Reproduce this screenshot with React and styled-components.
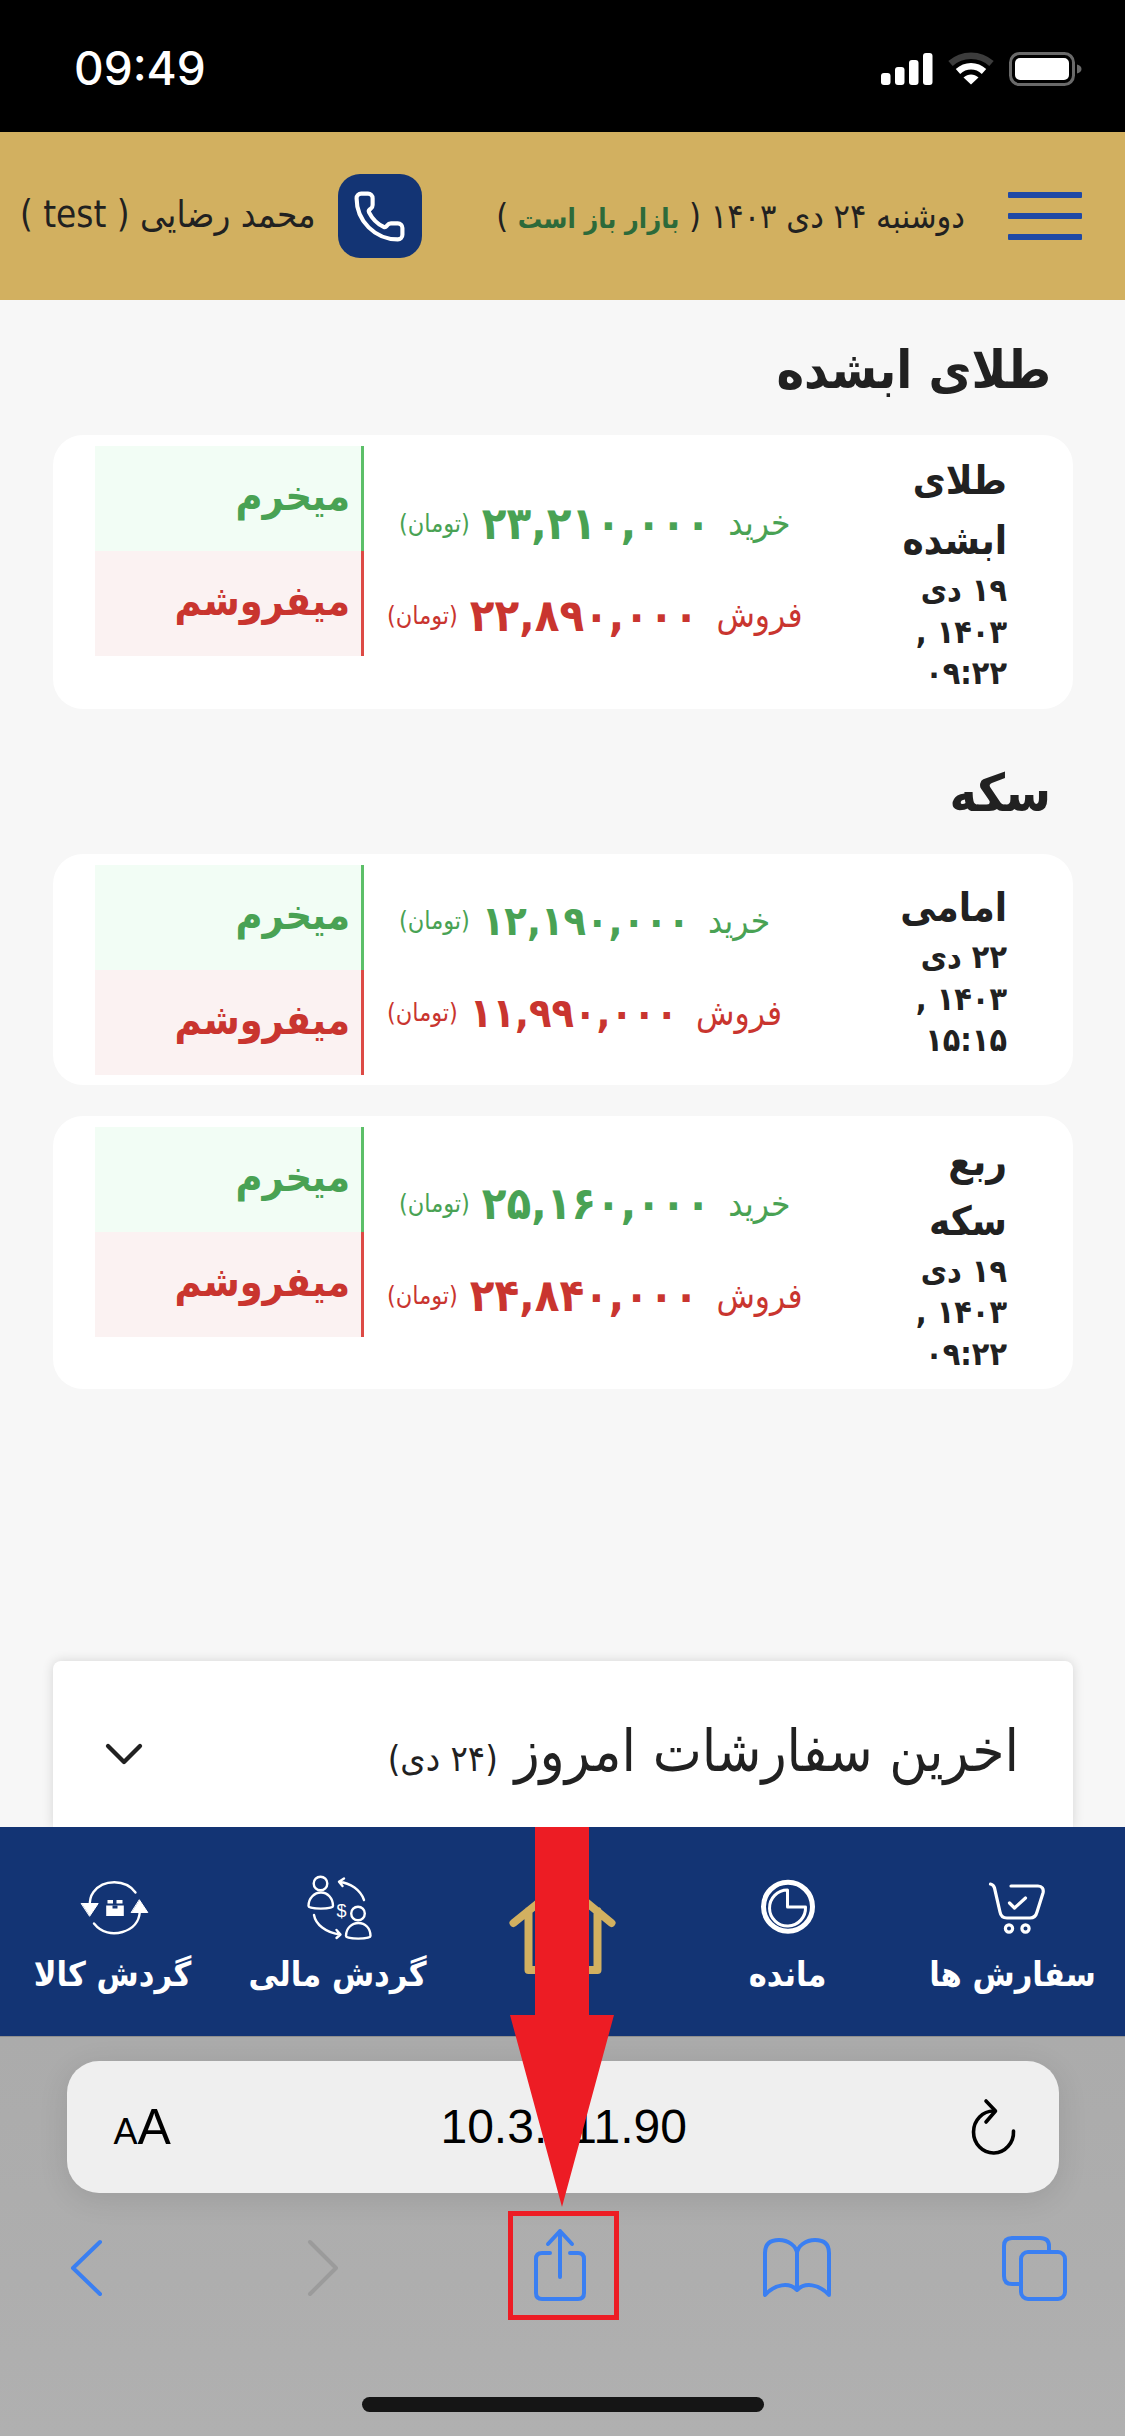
import React from 'react';
import styled, { createGlobalStyle } from 'styled-components';
import { Phone, ChevronDown } from 'lucide-react';

const Global = createGlobalStyle`
  html, body { margin: 0; padding: 0; background: #adadad; }
  * { box-sizing: border-box; }
`;

const fa = `"DejaVu Sans", sans-serif`;
const GREEN = '#49a254';
const RED = '#c9352f';
const NAVY = '#133474';
const BLUE = '#3a7ff2';

const Screen = styled.div`
  position: relative;
  width: 1125px;
  height: 2436px;
  overflow: hidden;
  display: flex;
  flex-direction: column;
  font-family: ${fa};
  font-stretch: condensed;
  color: #212121;
`;

const StatusBar = styled.div`
  height: 132px;
  flex: none;
  background: #000;
  display: flex;
  align-items: flex-start;
  justify-content: space-between;
  padding: 40px 43px 0 74px;
`;
const Clock = styled.div`
  font-family: Inter, sans-serif;
  font-stretch: normal;
  font-weight: 500;
  font-size: 46px;
  line-height: 56px;
  color: #fff;
`;
const StatusIcons = styled.div`
  display: flex;
  align-items: flex-start;
  gap: 15px;
  padding-top: 12px;
`;

const Header = styled.header`
  height: 168px;
  flex: none;
  background: #d2b060;
  display: flex;
  direction: rtl;
  align-items: center;
  padding: 0 43px 0 20px;
`;
const Burger = styled.div`
  width: 74px;
  display: flex;
  flex-direction: column;
  gap: 15px;
  & > i { display: block; height: 6px; background: #1f49a6; border-radius: 1px; }
`;
const DateLine = styled.div`
  flex: 1;
  font-size: 34px;
  margin-right: 43px;
  white-space: nowrap;
`;
const Market = styled.span`
  color: #2d6a3a;
  font-weight: 700;
  font-size: 27px;
`;
const CallButton = styled.div`
  width: 84px;
  height: 84px;
  border-radius: 22px;
  background: ${NAVY};
  color: #fff;
  display: flex;
  align-items: center;
  justify-content: center;
  margin-left: 22px;
`;
const UserName = styled.div`
  font-size: 36.5px;
  white-space: nowrap;
  margin-top: -4px;
`;

const Main = styled.main`
  flex: 1;
  min-height: 0;
  background: #f7f7f7;
  direction: rtl;
  display: flex;
  flex-direction: column;
  padding: 0 52px 0 53px;
`;
const Title = styled.h2`
  margin: ${p => p.$top}px 22px ${p => p.$bottom}px 0;
  height: 80px;
  line-height: 80px;
  font-size: 52px;
  font-weight: 700;
`;
const Card = styled.article`
  background: #fff;
  border-radius: 30px;
  padding: 11px 66px 10px 42px;
  display: flex;
  align-items: center;
  margin-bottom: 31px;
`;
const Item = styled.div`
  margin-left: auto;
  padding: 4px 0;
  text-align: right;
  white-space: nowrap;
`;
const ItemName = styled.div`
  font-size: 40px;
  font-weight: 700;
  line-height: 60px;
`;
const ItemDate = styled.div`
  font-size: 32px;
  font-weight: 700;
  line-height: 41.5px;
`;
const Prices = styled.div`
  display: flex;
  flex-direction: column;
  align-items: center;
  gap: 37px;
  margin-left: 23px;
  margin-top: -6px;
`;
const PriceRow = styled.div`
  display: flex;
  align-items: center;
  height: 55px;
  color: ${p => p.$c};
  white-space: nowrap;
`;
const PriceLabel = styled.span`
  font-size: 35px;
  margin-left: 18px;
`;
const Amount = styled.span`
  font-size: ${p => p.$size || 45}px;
  font-weight: 700;
  margin-left: 12px;
`;
const Toman = styled.span`
  font-size: 25px;
`;
const Actions = styled.div`
  align-self: flex-start;
  width: 269px;
  flex: none;
`;
const Action = styled.div`
  height: 105px;
  background: ${p => p.$bg};
  border-right: 3px solid ${p => p.$line};
  color: ${p => p.$c};
  font-size: 41px;
  font-weight: 700;
  padding: 0 11px 5px 0;
  display: flex;
  align-items: center;
  white-space: nowrap;
`;

const Accordion = styled.section`
  margin-top: auto;
  height: 166px;
  background: #fff;
  border-radius: 8px 8px 0 0;
  box-shadow: 0 0 12px rgba(0, 0, 0, 0.14);
  display: flex;
  align-items: center;
  justify-content: space-between;
  padding: 20px 54px 0 39px;
`;
const AccTitle = styled.div`
  font-size: 58px;
  white-space: nowrap;
  margin-top: -6px;
  & small { font-size: 36px; }
`;

const BottomNav = styled.nav`
  height: 210px;
  flex: none;
  background: ${NAVY};
  border-bottom: 1px solid #8f8f8f;
  display: grid;
  grid-template-columns: repeat(5, 225px);
  direction: rtl;
`;
const NavItem = styled.div`
  display: flex;
  flex-direction: column;
  align-items: center;
  padding-top: 48px;
  color: #fff;
`;
const NavLabel = styled.div`
  font-size: 34px;
  font-weight: 700;
  line-height: 50px;
  margin-top: 2px;
  white-space: nowrap;
`;

const Toolbar = styled.div`
  height: 399px;
  flex: none;
  padding-top: 24px;
  display: flex;
  flex-direction: column;
  align-items: center;
  background: linear-gradient(#ababab, #adadad 40%, #b0b0b0);
`;
const UrlBar = styled.div`
  width: 992px;
  height: 132px;
  border-radius: 32px;
  background: #efefef;
  box-shadow: 0 6px 30px rgba(0, 0, 0, 0.1);
  display: flex;
  align-items: center;
  justify-content: space-between;
  padding: 0 40px 0 47px;
  font-family: "Liberation Sans", sans-serif;
  font-stretch: normal;
  color: #000;
`;
const Aa = styled.div`
  font-size: 50px;
  line-height: 1;
  & small { font-size: 36px; }
`;
const Url = styled.div`
  font-size: 48px;
  line-height: 1;
  margin-right: 12px;
`;
const Tools = styled.div`
  width: 100%;
  display: flex;
  justify-content: space-between;
  margin-top: 35px;
  padding: 0 56px 0 51px;
`;
const HomeBar = styled.div`
  width: 402px;
  height: 15px;
  border-radius: 8px;
  background: #151515;
  margin-top: 89px;
`;
const ArrowOverlay = styled.svg`
  position: absolute;
  left: 505px;
  top: 1827px;
`;
const Highlight = styled.div`
  position: absolute;
  left: 508px;
  top: 2211px;
  width: 111px;
  height: 109px;
  border: 5px solid #ed1c24;
`;

const Signal = () => (
  <svg width="52" height="34" viewBox="0 0 52 34" fill="#fff">
    <rect x="0" y="21" width="9.5" height="12" rx="3" />
    <rect x="14" y="15" width="9.5" height="18" rx="3" />
    <rect x="28" y="8" width="9.5" height="25" rx="3" />
    <rect x="42" y="1" width="9.5" height="32" rx="3" />
  </svg>
);
const Wifi = () => (
  <svg width="46" height="34" viewBox="0 0 46 34" fill="none" strokeWidth="6.5">
    <path d="M2.5 11.5C14 1 32 1 43.5 11.5" stroke="#3c3c3c" />
    <path d="M10 19.5C17.5 12.5 28.5 12.5 36 19.5" stroke="#fff" />
    <path d="M23 32.5L15.5 25.5C20 21.5 26 21.5 30.5 25.5Z" fill="#fff" />
  </svg>
);
const Battery = () => (
  <svg width="73" height="34" viewBox="0 0 73 34">
    <rect x="1.5" y="1.5" width="63" height="31" rx="9" fill="none" stroke="#6a6a6a" strokeWidth="3" />
    <rect x="6" y="6" width="54" height="22" rx="5" fill="#fff" />
    <path d="M68 12.5c3 .6 4.5 2.4 4.5 4.5s-1.500 3.900-4.500 4.500z" fill="#6a6a6a" />
  </svg>
);

const IconSvg = ({ box, size = 72, children }) => (
  <svg width={size} height={size} viewBox={box} fill="none" stroke="currentColor" strokeWidth="3" strokeLinecap="round" strokeLinejoin="round">
    {children}
  </svg>
);
const CartIcon = () => (
  <IconSvg box="76.5 25 72 72">
    <path d="M90 34c2 .4 3.400 1.600 4 4l5.500 24c.7 4 3 6 7 6h23c4 0 6-2 7-6l6-19c1-4-1-7-5-7h-27" strokeWidth="3.2" />
    <path d="M109 53l5 5 11-10" strokeWidth="3.200" />
    <circle cx="108.500" cy="78.500" r="3.600" strokeWidth="3.200" />
    <circle cx="125" cy="78.500" r="3.600" strokeWidth="3.200" />
  </IconSvg>
);
const ClockIcon = () => (
  <IconSvg box="11.500 15 72 72">
    <circle cx="47.500" cy="46.700" r="24.500" strokeWidth="5" />
    <path d="M47 30A18 18 0 1 0 65 47H47Z" strokeWidth="3" />
  </IconSvg>
);
const HomeIcon = () => (
  <svg width="110" height="110" viewBox="507.500 1875 110 110" fill="none" stroke="#d2b060" strokeWidth="8" strokeLinecap="round" strokeLinejoin="round">
    <path d="M513 1923L562.500 1883L611 1923M528 1911V1970H597V1911" />
  </svg>
);
const MoneyIcon = () => (
  <IconSvg box="41.500 15 72 72">
    <g strokeWidth="2.400">
      <circle cx="60" cy="23.500" r="6.800" />
      <path d="M48 46C48 38 54 32.500 60.500 32.500C67 32.500 72.500 38 72.500 46C72.500 49.500 48 49.500 48 46Z" />
      <circle cx="97.500" cy="53.500" r="6.800" />
      <path d="M85.500 76C85.500 68 91.500 63 98 63C104.500 63 110 68 110 76C110 79.500 85.500 79.500 85.500 76Z" />
      <path d="M103.500 40C100 30 90 23 78.500 21.700M83.500 18.500L78.500 21.700L82 26" />
      <path d="M53.500 55C55 64 65 73 80 74.500M76 70L80 74.500L76 78" />
    </g>
    <text x="81" y="56.500" textAnchor="middle" fontFamily="Liberation Sans" fontSize="18" fill="currentColor" stroke="none">$</text>
  </IconSvg>
);
const GoodsIcon = () => (
  <IconSvg box="26.500 15 72 72">
    <path d="M85 32.500C75 19 53 19 43 32C40 36 39 42 39.300 47" strokeWidth="2.400" />
    <path d="M43.500 63.500C51 73 62 75 72 72C82 69 88.500 62 89.300 52" strokeWidth="2.400" />
    <path d="M31 43.500H47.700L39.300 56ZM81 52.500H97.300L89 40Z" fill="currentColor" stroke="currentColor" strokeWidth="1" />
    <path d="M55.700 45.500H73.300V56H55.700ZM57 40H62.500V43.500H57ZM66 40H72V43.500H66Z" fill="currentColor" stroke="none" />
    <path d="M62 45.500V48.500H67V45.500" fill={NAVY} stroke="none" />
  </IconSvg>
);

const ToolSvg = ({ box, color = BLUE, w = 4, children }) => (
  <svg width="70" height="80" viewBox={box} fill="none" stroke={color} strokeWidth={w} strokeLinecap="round" strokeLinejoin="round">
    {children}
  </svg>
);

const ReloadIcon = () => (
  <svg width="50" height="60" viewBox="968 2096 50 60" fill="none" stroke="#000" strokeWidth="3.600" strokeLinecap="round" strokeLinejoin="round">
    <path d="M1013.500 2130A20 21 0 1 1 994 2110" />
    <path d="M986 2100L995.500 2110L986 2121" />
  </svg>
);

const rows = {
  gold: { name: ['طلای', 'ابشده'], date: ['۱۹ دی', '۱۴۰۳ ,', '۰۹:۲۲'], buy: '۲۳,۲۱۰,۰۰۰', sell: '۲۲,۸۹۰,۰۰۰' },
  emami: { name: ['امامی'], date: ['۲۲ دی', '۱۴۰۳ ,', '۱۵:۱۵'], buy: '۱۲,۱۹۰,۰۰۰', sell: '۱۱,۹۹۰,۰۰۰', size: 41 },
  rob: { name: ['ربع', 'سکه'], date: ['۱۹ دی', '۱۴۰۳ ,', '۰۹:۲۲'], buy: '۲۵,۱۶۰,۰۰۰', sell: '۲۴,۸۴۰,۰۰۰' },
};

const PriceCard = ({ data }) => (
  <Card>
    <Item>
      {data.name.map(n => <ItemName key={n}>{n}</ItemName>)}
      {data.date.map(d => <ItemDate key={d}>{d}</ItemDate>)}
    </Item>
    <Prices>
      <PriceRow $c={GREEN}>
        <PriceLabel>خرید</PriceLabel>
        <Amount $size={data.size}>{data.buy}</Amount>
        <Toman>(تومان)</Toman>
      </PriceRow>
      <PriceRow $c={RED}>
        <PriceLabel>فروش</PriceLabel>
        <Amount $size={data.size}>{data.sell}</Amount>
        <Toman>(تومان)</Toman>
      </PriceRow>
    </Prices>
    <Actions>
      <Action $bg="#f2fdf5" $line="#5cbf68" $c={GREEN}>میخرم</Action>
      <Action $bg="#fbf2f2" $line="#dd4a45" $c={RED}>میفروشم</Action>
    </Actions>
  </Card>
);

export default function App() {
  return (
    <Screen>
      <Global />
      <StatusBar>
        <Clock>09:49</Clock>
        <StatusIcons>
          <Signal />
          <Wifi />
          <Battery />
        </StatusIcons>
      </StatusBar>
      <Header>
        <Burger><i /><i /><i /></Burger>
        <DateLine>دوشنبه ۲۴ دی ۱۴۰۳ ( <Market>بازار باز است</Market> )</DateLine>
        <CallButton><Phone size={55} strokeWidth={1.8} /></CallButton>
        <UserName>محمد رضایی ( test )</UserName>
      </Header>
      <Main>
        <Title $top={30} $bottom={25}>طلای ابشده</Title>
        <PriceCard data={rows.gold} />
        <Title $top={13} $bottom={21}>سکه</Title>
        <PriceCard data={rows.emami} />
        <PriceCard data={rows.rob} />
        <Accordion>
          <AccTitle>اخرین سفارشات امروز <small>(۲۴ دی)</small></AccTitle>
          <ChevronDown size={64} strokeWidth={1.6} />
        </Accordion>
      </Main>
      <BottomNav>
        <NavItem><CartIcon /><NavLabel>سفارش ها</NavLabel></NavItem>
        <NavItem><ClockIcon /><NavLabel>مانده</NavLabel></NavItem>
        <NavItem><HomeIcon /></NavItem>
        <NavItem><MoneyIcon /><NavLabel>گردش مالی</NavLabel></NavItem>
        <NavItem><GoodsIcon /><NavLabel>گردش کالا</NavLabel></NavItem>
      </BottomNav>
      <Toolbar>
        <UrlBar>
          <Aa><small>A</small>A</Aa>
          <Url>10.3.111.90</Url>
          <ReloadIcon />
        </UrlBar>
        <Tools>
          <ToolSvg box="51 2228 70 80"><path d="M100 2242L73 2268L100 2294" /></ToolSvg>
          <ToolSvg box="295 2228 70 80" color="#9b9b9b"><path d="M317 2242L343 2268L317 2294" /></ToolSvg>
          <ToolSvg box="527 2228 70 80" w={4}>
            <path d="M552 2253H544Q538 2253 538 2259V2293Q538 2299 544 2299H580Q586 2299 586 2293V2259Q586 2253 580 2253H572" />
            <path d="M562 2231V2277M550 2244L562 2231L574 2244" />
          </ToolSvg>
          <ToolSvg box="763 2228 70 80" w={4}>
            <path d="M798 2290C790 2282 776 2284 766 2295V2253C766 2242 774 2240 780 2240C789 2240 798 2246 798 2254C798 2246 807 2240 816 2240C822 2240 830 2242 830 2253V2295C820 2284 806 2282 798 2290ZM798 2254V2290" />
          </ToolSvg>
          <ToolSvg box="999 2228 70 80" w={4}>
            <path d="M1019 2284H1012Q1004 2284 1004 2276V2246Q1004 2238 1012 2238H1040Q1049 2238 1049 2246V2251" />
            <rect x="1021" y="2252" width="44" height="47" rx="7" />
          </ToolSvg>
        </Tools>
        <HomeBar />
      </Toolbar>
      <ArrowOverlay width="120" height="385" viewBox="505 1827 120 385">
        <path d="M535 1827H589V2015H614L562 2207L510 2015H535Z" fill="#ed1c24" />
      </ArrowOverlay>
      <Highlight />
    </Screen>
  );
}
